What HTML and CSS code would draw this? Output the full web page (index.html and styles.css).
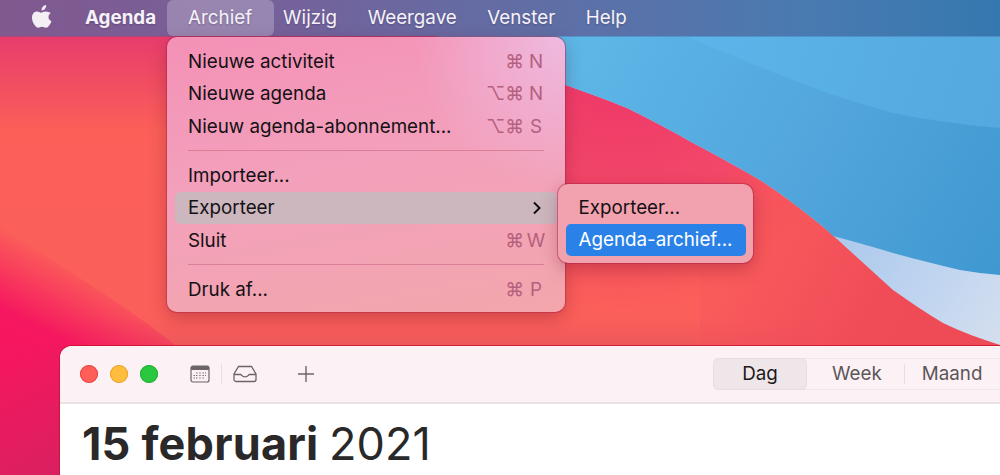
FILE: index.html
```html
<!DOCTYPE html>
<html lang="nl">
<head>
<meta charset="utf-8">
<title>Agenda</title>
<link rel="stylesheet" href="styles.css">
</head>
<body>
<svg class="wallpaper" viewBox="0 0 1000 475" preserveAspectRatio="none" aria-hidden="true">
  <defs>
    <linearGradient id="red" gradientUnits="userSpaceOnUse" x1="0" y1="36" x2="0" y2="350">
      <stop offset="0" stop-color="#e73c6c"/>
      <stop offset="0.3" stop-color="#fb5f58"/>
      <stop offset="0.9" stop-color="#fb5f5a"/>
      <stop offset="1" stop-color="#ec565a"/>
    </linearGradient>
    <linearGradient id="hot" gradientUnits="userSpaceOnUse" x1="0" y1="400" x2="85" y2="240">
      <stop offset="0" stop-color="#f5145f"/>
      <stop offset="0.45" stop-color="#f5175f"/>
      <stop offset="0.85" stop-color="#f5175f" stop-opacity="0"/>
    </linearGradient>
    <linearGradient id="hotfoot" gradientUnits="userSpaceOnUse" x1="0" y1="360" x2="60" y2="475">
      <stop offset="0" stop-color="#f5175f"/>
      <stop offset="1" stop-color="#d92060"/>
    </linearGradient>
    <radialGradient id="pinkband" gradientUnits="userSpaceOnUse" cx="620" cy="60" r="250">
      <stop offset="0" stop-color="#ec3668"/>
      <stop offset="0.6" stop-color="#f2456a" stop-opacity=".9"/>
      <stop offset="1" stop-color="#f2455f" stop-opacity="0"/>
    </radialGradient>
    <linearGradient id="redfoot" gradientUnits="userSpaceOnUse" x1="700" y1="200" x2="1000" y2="345">
      <stop offset="0" stop-color="#f5505f" stop-opacity="0"/>
      <stop offset="0.6" stop-color="#f04c58"/>
      <stop offset="1" stop-color="#ee4a56"/>
    </linearGradient>
    <linearGradient id="blue" gradientUnits="userSpaceOnUse" x1="600" y1="40" x2="1000" y2="275">
      <stop offset="0" stop-color="#5cb6e6"/>
      <stop offset="0.5" stop-color="#52a6dc"/>
      <stop offset="1" stop-color="#3f98d0"/>
    </linearGradient>
    <linearGradient id="blueTop" gradientUnits="userSpaceOnUse" x1="680" y1="30" x2="1000" y2="130">
      <stop offset="0" stop-color="#5cb5ea"/>
      <stop offset="1" stop-color="#54a9de"/>
    </linearGradient>
    <linearGradient id="pale" gradientUnits="userSpaceOnUse" x1="840" y1="240" x2="1000" y2="345">
      <stop offset="0" stop-color="#adc9ec"/>
      <stop offset="0.5" stop-color="#bfd4f0"/>
      <stop offset="1" stop-color="#d4dfee"/>
    </linearGradient>
  </defs>
  <rect width="1000" height="475" fill="url(#red)"/>
  <path d="M0 225 C40 255 120 300 175 345 V360 H0Z" fill="url(#hot)"/>
  <rect x="0" y="345" width="70" height="130" fill="url(#hotfoot)"/>
  <rect x="400" y="30" width="600" height="300" fill="url(#pinkband)"/>
  <rect x="700" y="200" width="300" height="150" fill="url(#redfoot)"/>
  <path d="M430 34 C480 52 525 68 560 83 C585 92 605 99 627 108 C650 119 672 131 693 143 C716 155 738 167 760 180 C783 195 805 212 827 230 C838 240 849 250 860 260 C871 270 882 280 893 290 C910 302 926 313 943 323 C962 332 981 339 1000 345 V0 H430Z" fill="url(#pale)"/>
  <path d="M430 34 C480 52 525 68 560 83 C585 92 605 99 627 108 C650 119 672 131 693 143 C716 155 738 167 760 180 C783 195 805 212 827 230 L833 236 C853 241 873 247 893 253 C915 259 938 265 960 270 C973 272 987 274 1000 275 V0 H430Z" fill="url(#blue)"/>
  <path d="M680 33 L687 37 C711 47 736 57 760 67 C782 76 805 85 827 93 C849 100 871 107 893 113 C928 120 964 125 1000 128 V0 H680Z" fill="url(#blueTop)"/>
</svg>

<header class="menubar">
  <svg class="apple" viewBox="0 0 20 24" aria-hidden="true"><path fill="#f3eff5" d="M14.2 0c.1 1.400-.4 2.700-1.200 3.700-.9 1-2.200 1.800-3.400 1.700-.2-1.300.4-2.700 1.200-3.600C11.600.8 13 .1 14.200 0zM18.900 8.100c-1.500.9-2.400 2.300-2.400 4 0 2 1.200 3.500 3 4.200-.4 1.200-1 2.400-1.800 3.500-1 1.500-2.100 3-3.700 3-1.600 0-2.100-1-3.900-1-1.900 0-2.400 1-3.900 1-1.600 0-2.700-1.500-3.800-3C.8 17.600 0 15 0 12.600 0 8.700 2.500 6.600 5 6.600c1.600 0 3 1.100 4 1.100 1 0 2.500-1.200 4.400-1.200 2.300 0 4.300.900 5.500 1.600z"/></svg>
  <span class="menu-title app">Agenda</span>
  <span class="menu-title active">Archief</span>
  <span class="menu-title">Wijzig</span>
  <span class="menu-title">Weergave</span>
  <span class="menu-title">Venster</span>
  <span class="menu-title">Help</span>
</header>

<nav class="menu main-menu">
  <div class="item"><span>Nieuwe activiteit</span><span class="keys"><span>⌘</span><span class="key">N</span></span></div>
  <div class="item"><span>Nieuwe agenda</span><span class="keys"><span>⌥⌘</span><span class="key">N</span></span></div>
  <div class="item"><span>Nieuw agenda-abonnement...</span><span class="keys"><span>⌥⌘</span><span class="key">S</span></span></div>
  <div class="sep"></div>
  <div class="item"><span>Importeer...</span></div>
  <div class="item hover"><span>Exporteer</span>
    <svg class="chevron" viewBox="0 0 10 14" aria-hidden="true"><path d="M2 1.500 7.500 7 2 12.500" fill="none" stroke="#111" stroke-width="2"/></svg>
  </div>
  <div class="item"><span>Sluit</span><span class="keys"><span>⌘</span><span class="key">W</span></span></div>
  <div class="sep"></div>
  <div class="item"><span>Druk af...</span><span class="keys"><span>⌘</span><span class="key">P</span></span></div>
</nav>

<nav class="menu sub-menu">
  <div class="item"><span>Exporteer...</span></div>
  <div class="item selected"><span>Agenda-archief...</span></div>
</nav>

<section class="window">
  <div class="toolbar">
    <div class="lights">
      <span class="light red"></span>
      <span class="light yellow"></span>
      <span class="light green"></span>
    </div>
    <svg class="tool cal" viewBox="0 0 20 18" aria-hidden="true">
      <rect x="1" y="1" width="18" height="16" rx="2" fill="#fbf1f4" stroke="#6b6569" stroke-width="1.200"/>
      <path d="M1 2.500a1.500 1.500 0 0 1 1.500-1.500h15a1.500 1.500 0 0 1 1.500 1.500V5H1Z" fill="#6b6569"/>
      <path d="M6 8h1.500M9.200 8h1.500M12.400 8h1.500M15 8h1M3.500 10.500H5M6 10.500h1.500M9.200 10.500h1.500M12.400 10.500h1.500M15 10.500h1M3.500 13H5M6 13h1.500M9.200 13h1.500M12.400 13h1.500" stroke="#7a7478" stroke-width="1.200"/>
    </svg>
    <span class="tool-sep"></span>
    <svg class="tool inbox" viewBox="0 0 24 18" aria-hidden="true">
      <path d="M5.500 1.500h13L23 9v5.500a2 2 0 0 1-2 2H3a2 2 0 0 1-2-2V9ZM1 9.500h6.500c.8 0 1 .6 1.500 1.200.6.8 1.500 1.100 3 1.100s2.400-.3 3-1.100c.5-.6.700-1.200 1.500-1.200H23" fill="none" stroke="#6b6569" stroke-width="1.300"/>
    </svg>
    <svg class="tool plus" viewBox="0 0 16 16" aria-hidden="true"><path d="M8 0v16M0 8h16" stroke="#6b6569" stroke-width="1.400"/></svg>
    <div class="segments">
      <span class="seg on">Dag</span>
      <span class="seg">Week</span>
      <span class="seg-sep"></span>
      <span class="seg">Maand</span>
    </div>
  </div>
  <div class="content">
    <h1 class="date"><strong>15 februari</strong> 2021</h1>
  </div>
</section>
</body>
</html>
```
FILE: styles.css
```css
* { box-sizing: border-box; }
html, body { margin: 0; height: 475px; }
body {
  position: relative;
  overflow: hidden;
  width: 1000px;
  font-family: Inter, "Noto Sans", "Liberation Sans", sans-serif;
  color: #141114;
  background: #f0405f;
}
.wallpaper { position: absolute; left: 0; top: 0; width: 1000px; height: 475px; }

.menubar {
  position: relative;
  display: flex;
  align-items: center;
  height: 36px;
  padding-left: 32px;
  background: linear-gradient(90deg, #80598f 0%, #76619a 27%, #5b71a8 60%, #4a7ab0 80%, #3578b0 100%);
  box-shadow: 0 1px 0 rgba(70, 90, 150, .35);
  color: #f6f2f8;
  font-size: 18.8px;
  text-shadow: 0 1px 2px rgba(40, 30, 70, .3);
}
.apple { width: 20px; height: 24px; margin-right: 33px; margin-top: -2px; flex: none; }
.menu-title { padding: 0 15.250px; height: 36px; line-height: 36px; }
.menu-title.app { font-weight: 700; padding: 0 11px 0 0; }
.menu-title.active { background: rgba(255, 255, 255, .24); border-radius: 6px; padding: 0 21px; width: 107px; margin-right: -6.250px; }

.menu {
  position: absolute;
  display: flex;
  flex-direction: column;
  border-radius: 10px;
  font-size: 18.8px;
  box-shadow: 0 0 0 1px rgba(170, 30, 70, .45), 0 6px 18px rgba(90, 0, 30, .28);
}
.main-menu {
  left: 167px; top: 37px; width: 398px; height: 275px;
  padding: 8px 8px 6px;
  background:
    radial-gradient(circle at 100% 0, #eebbe0 0, rgba(240, 170, 215, 0) 150px),
    linear-gradient(170deg, #f491b6 0%, #f3a0bc 45%, #f3a6ac 100%);
}
.sub-menu {
  left: 558px; top: 184px; width: 195px; height: 79px;
  padding: 7px 7.500px;
  background: #f2a2ae;
}
.item {
  position: relative;
  display: flex;
  align-items: center;
  justify-content: space-between;
  height: 32.500px;
  padding: 0 13px;
  border-radius: 5px;
}
.sub-menu .item { height: 32.500px; padding: 0 13px; }
.item.hover { background: #ccb7bf; }
.item.selected { background: #2a82e8; color: #fff; }
.keys {
  display: flex;
  color: #b5607f;
  gap: 2px;
  margin-right: -2px;
}
.key { width: 20px; text-align: center; }
.chevron { width: 10px; height: 14px; margin-right: 2.500px; }
.sep { position: relative; height: 1px; margin: 7.500px 13px 8px; background: #d98098; }

.window {
  position: absolute;
  left: 60px; top: 346px;
  width: 960px; height: 140px;
  border-radius: 12px 12px 0 0;
  overflow: hidden;
  background: #fff;
  box-shadow: 0 0 0 1px rgba(200, 15, 40, .75);
}
.toolbar {
  display: flex;
  align-items: center;
  height: 58px;
  padding-left: 20px;
  background: #fcf1f4;
  border-bottom: 2px solid #e8e2e5;
}
.lights { display: flex; flex: none; gap: 12px; margin-right: 32px; }
.light { width: 18px; height: 18px; border-radius: 50%; }
.red { background: #ff5f58; box-shadow: inset 0 0 0 1px #e5484a; }
.yellow { background: #ffbd3e; box-shadow: inset 0 0 0 1px #e5a32f; }
.green { background: #2ac840; box-shadow: inset 0 0 0 1px #23ad37; }
.tool { display: block; flex: none; }
.cal { width: 20px; height: 18px; }
.tool-sep { flex: none; width: 1px; height: 20px; background: #e6dfe2; margin: 0 11px 0 11px; }
.inbox { width: 24px; height: 18px; }
.plus { width: 16px; height: 16px; margin-left: 41px; }
.segments {
  display: flex;
  align-items: center;
  flex: none;
  height: 32px;
  margin-left: 399px;
  border-radius: 6px;
  box-shadow: inset 0 0 0 1px #eee6e9;
  font-size: 18.8px;
  color: #5d5659;
}
.seg { display: block; line-height: 32px; padding: 0 22px 0 25px; }
.seg.on { width: 94px; padding: 0; text-align: center; background: #efe6e9; color: #1c191b; border-radius: 6px; box-shadow: inset 0 0 0 1px #e6dee1; }
.seg-sep { flex: none; width: 1px; height: 20px; background: #e6dfe2; }
.seg:last-child { padding: 0 40px 0 17px; }
.content { padding: 14px 22px; }
.date {
  margin: 0;
  font-size: 45px;
  line-height: 52px;
  font-weight: 400;
  color: #2a2829;
  white-space: nowrap;
}
.date strong { font-weight: 700; letter-spacing: .2px; margin-right: -2px; }
```
